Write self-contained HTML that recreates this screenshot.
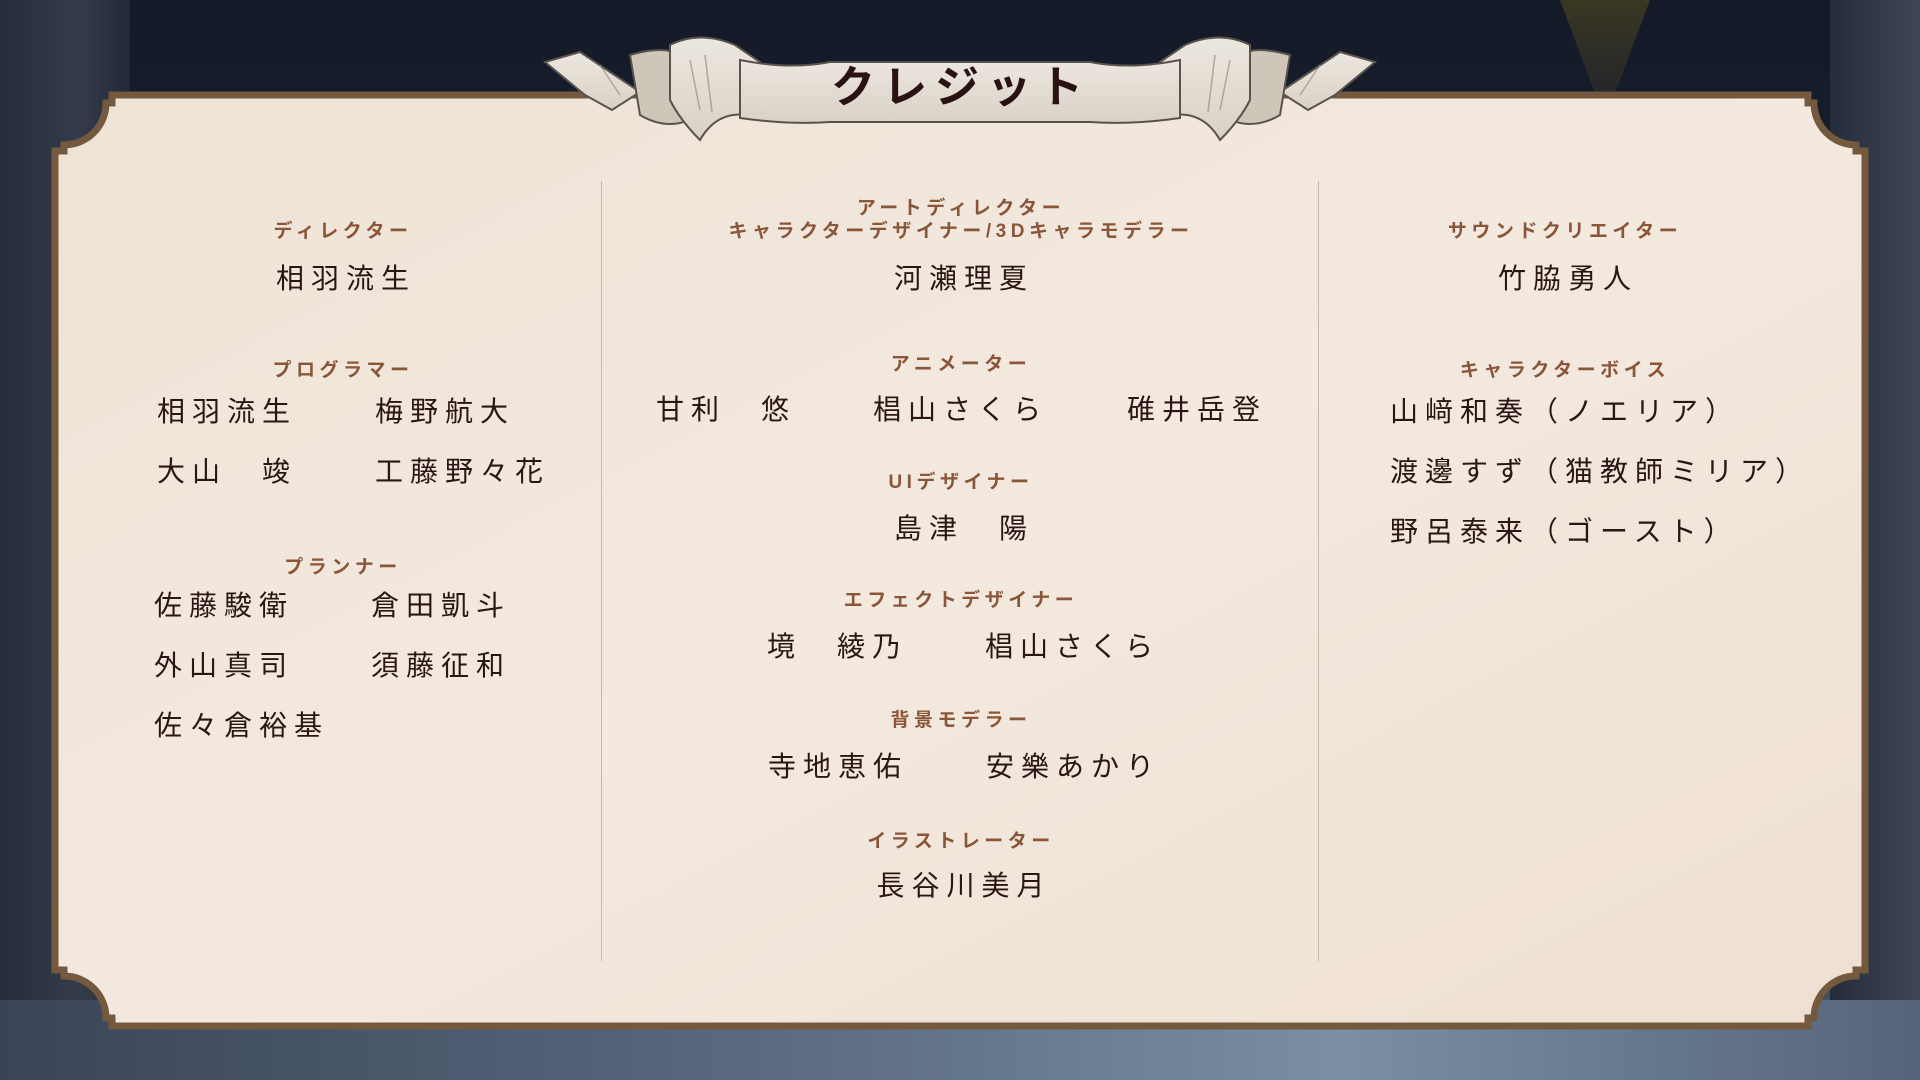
<!DOCTYPE html>
<html><head><meta charset="utf-8"><style>
html,body{margin:0;padding:0;}
body{width:1920px;height:1080px;position:relative;overflow:hidden;
background:linear-gradient(180deg,#141a28 0%,#1b2232 40%,#2a3345 75%,#4d5c72 100%);
font-family:"Liberation Sans","Noto Sans CJK JP",sans-serif;}
.bg1{position:absolute;left:0;top:0;width:130px;height:1080px;background:linear-gradient(90deg,#252c3a,#343c4c 60%,#222938);}
.bg2{position:absolute;right:0;top:0;width:90px;height:1080px;background:linear-gradient(90deg,#252c3a,#3e4656);}
.bg3{position:absolute;left:1560px;top:0;width:90px;height:120px;background:linear-gradient(180deg,#4a4420,#22242a);clip-path:polygon(0 0,100% 0,50% 100%);opacity:.7}
.bg4{position:absolute;left:0;top:1000px;width:1920px;height:80px;background:linear-gradient(90deg,#3a4456,#5a6a80 40%,#7a8ea4 70%,#55647a);}
svg{position:absolute;left:0;top:0;}
.h{position:absolute;color:#8a5638;font-size:19px;letter-spacing:4.5px;font-weight:bold;white-space:nowrap;transform:translateX(-50%);line-height:20px;}
.n{position:absolute;color:#2a1614;font-size:28px;letter-spacing:7px;white-space:nowrap;line-height:32px;}
.c{transform:translateX(-50%);}
.div{position:absolute;top:181px;width:1px;height:780px;background:#c9b9aa;}
.title{position:absolute;left:961px;top:64px;transform:translateX(-50%);font-size:44px;font-weight:bold;letter-spacing:8px;color:#2a1212;line-height:48px;white-space:nowrap;}
</style></head><body>
<div class="bg1"></div><div class="bg2"></div><div class="bg3"></div><div class="bg4"></div>
<svg width="1920" height="1080" viewBox="0 0 1920 1080">
<defs>
<linearGradient id="pp" x1="0" y1="0" x2="1" y2="1"><stop offset="0" stop-color="#efe3d6"/><stop offset=".5" stop-color="#f3e9df"/><stop offset="1" stop-color="#eee0d2"/></linearGradient>
<linearGradient id="rb" x1="0" y1="0" x2="0" y2="1"><stop offset="0" stop-color="#ece7df"/><stop offset="1" stop-color="#d9d1c6"/></linearGradient>
</defs>
<path d="M112,95 H1808 V103 H1814 A42 42 0 0 0 1856,145 V151 H1865 V970 H1856 V976 A42 42 0 0 0 1814,1018 H1808 V1026 H112 V1018 H106 A42 42 0 0 0 64,976 V970 H55 V151 H64 V145 A42 42 0 0 0 106,103 H112 Z" fill="url(#pp)" stroke="#75593f" stroke-width="7"/>
<!-- ribbon -->
<g stroke="#5a524c" stroke-width="2" fill="url(#rb)">
<path d="M545,62 L580,52 L610,72 L640,92 L612,110 L585,95 Z"/>
<path d="M630,55 Q665,45 680,55 L690,120 Q665,130 640,115 Z" fill="#cfc6ba"/>
<path d="M670,45 Q700,30 735,45 L760,62 L760,118 Q720,105 700,140 Q680,120 670,100 Z"/>
<path d="M1375,62 L1340,52 L1310,72 L1280,92 L1308,110 L1335,95 Z"/>
<path d="M1290,55 Q1255,45 1240,55 L1230,120 Q1255,130 1280,115 Z" fill="#cfc6ba"/>
<path d="M1250,45 Q1220,30 1185,45 L1160,62 L1160,118 Q1200,105 1220,140 Q1240,120 1250,100 Z"/>
<path d="M740,60 Q790,70 830,62 H1090 Q1130,70 1180,60 L1180,118 Q1130,125 1090,122 H830 Q790,125 740,118 Z"/>
</g>
<g stroke="#8b8076" stroke-width="1.5" opacity=".6">
<path d="M690,60 L700,110 M705,55 L712,112 M1230,60 L1220,110 M1215,55 L1208,112 M600,65 L620,95 M1320,65 L1300,95"/>
</g>
</svg>
<div class="title">クレジット</div>
<div class="div" style="left:601px"></div>
<div class="div" style="left:1318px"></div>

<div class="h" style="left:343px;top:222px">ディレクター</div>
<div class="n c" style="left:346px;top:263px">相羽流生</div>
<div class="h" style="left:343px;top:361px">プログラマー</div>
<div class="n" style="left:157px;top:396px">相羽流生</div>
<div class="n" style="left:375px;top:396px">梅野航大</div>
<div class="n" style="left:157px;top:456px">大山　竣</div>
<div class="n" style="left:375px;top:456px">工藤野々花</div>
<div class="h" style="left:343px;top:558px">プランナー</div>
<div class="n" style="left:154px;top:590px">佐藤駿衛</div>
<div class="n" style="left:371px;top:590px">倉田凱斗</div>
<div class="n" style="left:154px;top:650px">外山真司</div>
<div class="n" style="left:371px;top:650px">須藤征和</div>
<div class="n" style="left:154px;top:710px">佐々倉裕基</div>

<div class="h" style="left:961px;top:199px">アートディレクター</div>
<div class="h" style="left:961px;top:222px">キャラクターデザイナー/3Dキャラモデラー</div>
<div class="n c" style="left:964px;top:263px">河瀬理夏</div>
<div class="h" style="left:961px;top:355px">アニメーター</div>
<div class="n" style="left:656px;top:394px">甘利　悠</div>
<div class="n" style="left:873px;top:394px">椙山さくら</div>
<div class="n" style="left:1127px;top:394px">碓井岳登</div>
<div class="h" style="left:961px;top:473px">UIデザイナー</div>
<div class="n c" style="left:964px;top:513px">島津　陽</div>
<div class="h" style="left:961px;top:591px">エフェクトデザイナー</div>
<div class="n" style="left:767px;top:631px">境　綾乃</div>
<div class="n" style="left:985px;top:631px">椙山さくら</div>
<div class="h" style="left:961px;top:711px">背景モデラー</div>
<div class="n" style="left:768px;top:751px">寺地恵佑</div>
<div class="n" style="left:986px;top:751px">安樂あかり</div>
<div class="h" style="left:961px;top:832px">イラストレーター</div>
<div class="n c" style="left:964px;top:870px">長谷川美月</div>

<div class="h" style="left:1565px;top:222px">サウンドクリエイター</div>
<div class="n c" style="left:1568px;top:263px">竹脇勇人</div>
<div class="h" style="left:1565px;top:361px">キャラクターボイス</div>
<div class="n" style="left:1390px;top:396px">山﨑和奏（ノエリア）</div>
<div class="n" style="left:1390px;top:456px">渡邊すず（猫教師ミリア）</div>
<div class="n" style="left:1390px;top:516px">野呂泰来（ゴースト）</div>
</body></html>
